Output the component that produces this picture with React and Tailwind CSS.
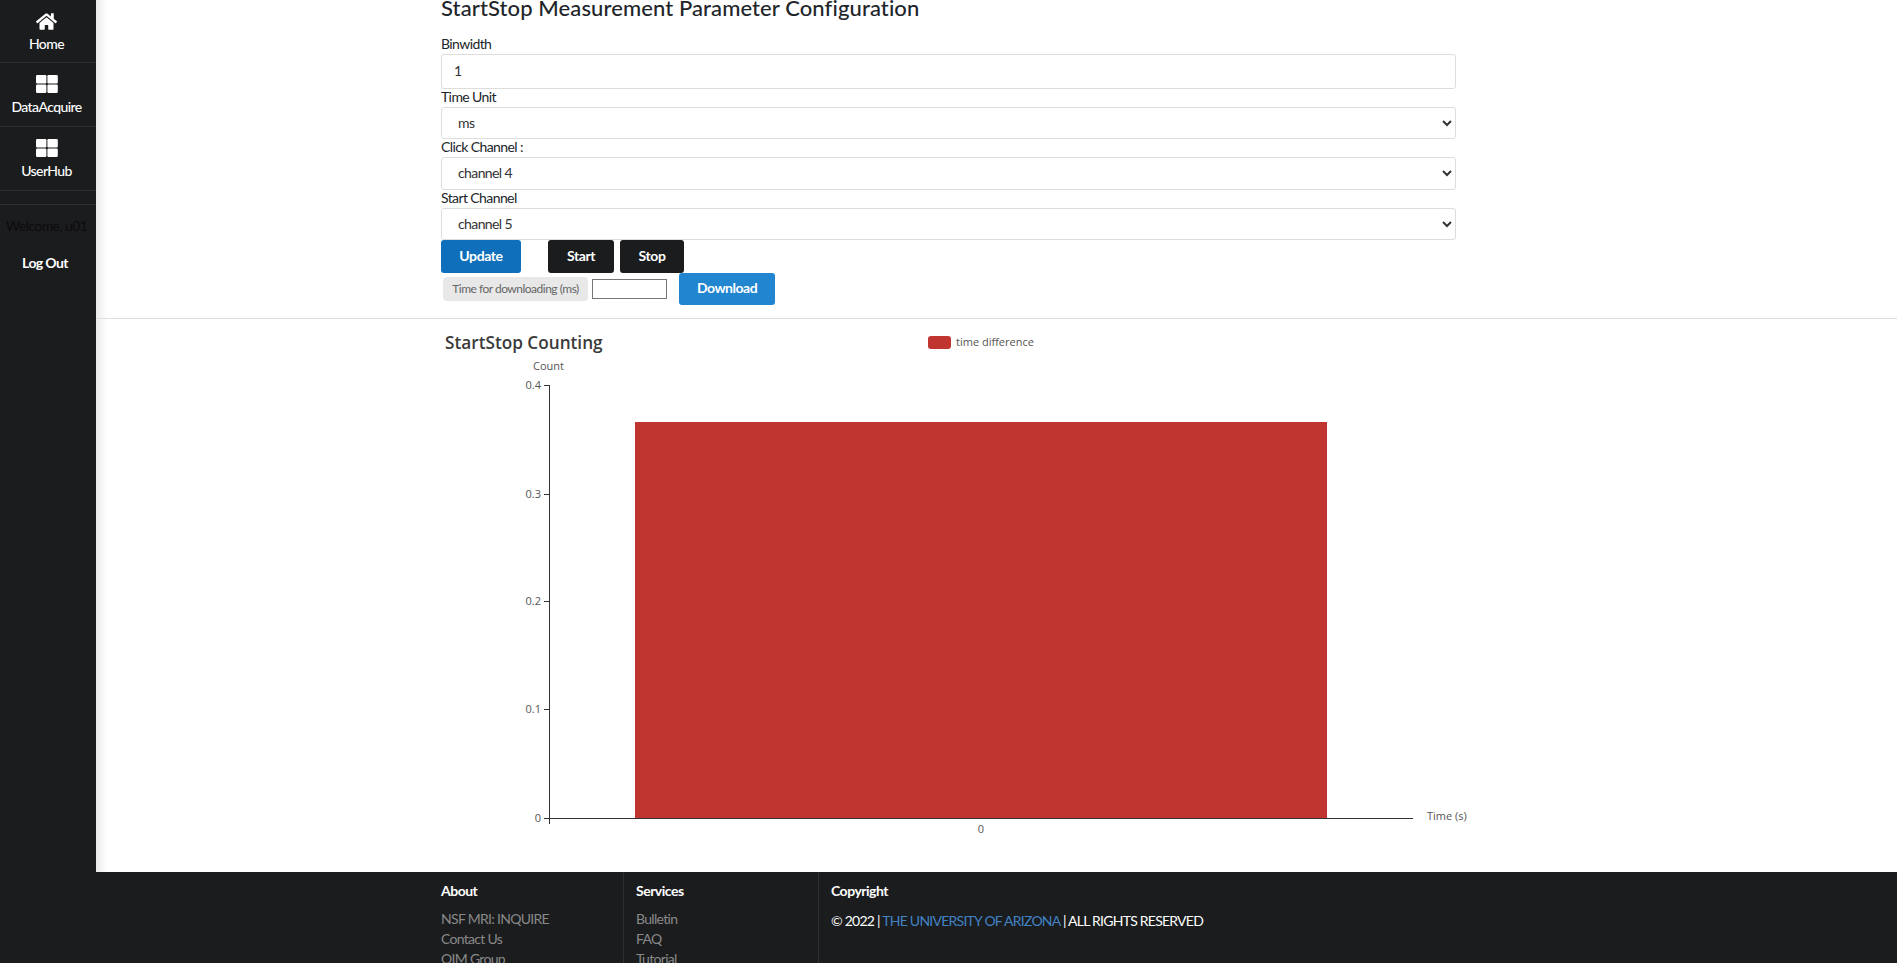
import { FaHome } from 'react-icons/fa'

const lato = 'font-["Lato","Liberation_Sans",sans-serif]'

function GridIcon() {
  return (
    <svg width="22" height="18" viewBox="0 0 22 18" fill="#fff">
      <rect x="0" y="0" width="10.4" height="8.4" rx="1.2" />
      <rect x="11.4" y="0" width="10.4" height="8.4" rx="1.2" />
      <rect x="0" y="9.6" width="10.4" height="8.4" rx="1.2" />
      <rect x="11.4" y="9.6" width="10.4" height="8.4" rx="1.2" />
    </svg>
  )
}

function SideItem({ icon, label, className, labelClass = 'mt-[4px]' }) {
  return (
    <div className={`flex flex-col items-center pr-[3px] border-b border-[#2e2f31] ${className}`}>
      {icon}
      <span className={`text-[14px] leading-[20px] font-medium tracking-[-0.6px] text-white ${labelClass}`}>{label}</span>
    </div>
  )
}

function Sidebar() {
  return (
    <aside className="w-[96px] shrink-0 bg-[#1b1c1e] flex flex-col">
      <SideItem icon={<FaHome size={21} color="#fff" />} label="Home" className="h-[63px] pt-[11px]" labelClass="mt-[2px]" />
      <SideItem icon={<GridIcon />} label="DataAcquire" className="h-[64px] pt-[12px]" />
      <SideItem icon={<GridIcon />} label="UserHub" className="h-[64px] pt-[12px]" />
      <div className="h-[14px] border-b border-[#2e2f31]" />
      <div className="mt-[11px] pr-[3px] text-center text-[14px] leading-[20px] tracking-[-0.6px] text-[#0b0b0c]">Welcome, u01</div>
      <div className="mt-[17px] pr-[6px] text-center text-[14px] leading-[20px] tracking-[-0.6px] font-bold text-white">Log Out</div>
    </aside>
  )
}

function Field({ label, children }) {
  return (
    <div className="flex flex-col">
      <label className="text-[14px] leading-[16px] pb-[2px] tracking-[-0.6px] text-[#212529]">{label}</label>
      {children}
    </div>
  )
}

function Choice({ value, height }) {
  return (
    <select
      defaultValue={value}
      className={`w-full ${height} bg-white border border-[#dddddd] rounded-[3px] pl-[12px] pr-[6px] pb-[2px] text-[14px] tracking-[-0.6px] text-[#333333]`}
    >
      <option>{value}</option>
    </select>
  )
}

function ConfigForm() {
  return (
    <div className="ml-[345px] w-[1015px] -mt-[6px]">
      <h1 className="text-[22px] leading-[28px] font-medium tracking-[0.1px] text-[#212529]">StartStop Measurement Parameter Configuration</h1>
      <div className="mt-[14px] flex flex-col">
        <Field label="Binwidth">
          <input
            readOnly
            value="1"
            className="w-full h-[35px] bg-white border border-[#dddddd] rounded-[3px] px-[12px] pb-[2px] text-[14px] text-[#333333]"
          />
        </Field>
        <Field label="Time Unit"><Choice value="ms" height="h-[32px]" /></Field>
        <Field label="Click Channel :"><Choice value="channel 4" height="h-[33px]" /></Field>
        <Field label="Start Channel"><Choice value="channel 5" height="h-[32px]" /></Field>
      </div>
      <div className="flex h-[33px]">
        <button className="w-[80px] pb-[3px] rounded-[3px] bg-[#0f6fba] text-white text-[14px] tracking-[-0.4px] font-bold">Update</button>
        <button className="w-[66px] ml-[27px] pb-[3px] rounded-[3px] bg-[#1b1c1e] text-white text-[14px] tracking-[-0.4px] font-bold">Start</button>
        <button className="w-[64px] ml-[6px] pb-[3px] rounded-[3px] bg-[#1b1c1e] text-white text-[14px] tracking-[-0.4px] font-bold">Stop</button>
      </div>
      <div className="flex items-center h-[32px]">
        <span className="ml-[2px] w-[145px] h-[24px] flex items-center justify-center rounded-[4px] bg-[#e8e8e8] text-[12px] tracking-[-0.5px] text-[#666666]">Time for downloading (ms)</span>
        <input readOnly className="ml-[4px] w-[75px] h-[20px] border border-[#767676] bg-white" />
        <button className="ml-[12px] w-[96px] h-[32px] pb-[3px] rounded-[3px] bg-[#2185d0] text-white text-[14px] tracking-[-0.5px] font-bold">Download</button>
      </div>
    </div>
  )
}

function Chart() {
  // plot coordinates are page pixels minus the svg origin (96, 319)
  const ticks = [
    ['0.4', 66],
    ['0.3', 175],
    ['0.2', 282],
    ['0.1', 390],
    ['0', 499],
  ]
  const font = '"Open Sans", "Noto Sans", sans-serif'
  return (
    <svg width="1801" height="553" className="block">
      <text x="349" y="30" fontFamily={font} fontSize="17.2" fontWeight="600" fill="#3a3a3a">StartStop Counting</text>
      <rect x="832" y="17" width="23" height="13" rx="3" fill="#c03530" />
      <text x="860" y="27" fontFamily={font} fontSize="11" fill="#555555">time difference</text>
      <text x="437" y="51" fontFamily={font} fontSize="11" fill="#555555">Count</text>
      <rect x="539" y="103" width="692" height="396" fill="#c03530" />
      <line x1="453.5" y1="66" x2="453.5" y2="505" stroke="#333333" />
      <line x1="453" y1="499.5" x2="1317" y2="499.5" stroke="#333333" />
      {ticks.map(([label, y]) => (
        <g key={label}>
          <line x1="448" y1={y + 0.5} x2="453" y2={y + 0.5} stroke="#333333" />
          <text x="445" y={y + 4} textAnchor="end" fontFamily={font} fontSize="11" fill="#555555">{label}</text>
        </g>
      ))}
      <text x="885" y="514" textAnchor="middle" fontFamily={font} fontSize="11" fill="#555555">0</text>
      <text x="1331" y="501" fontFamily={font} fontSize="11" fill="#555555">Time (s)</text>
    </svg>
  )
}

function FooterCol({ title, items, className }) {
  return (
    <div className={`pt-[9px] ${className}`}>
      <div className="text-[14px] leading-[20px] tracking-[-0.5px] font-bold text-white">{title}</div>
      <ul className="mt-[8px] flex flex-col">
        {items.map((item) => (
          <li key={item} className="text-[14px] leading-[20px] tracking-[-0.7px] text-[#888888]">{item}</li>
        ))}
      </ul>
    </div>
  )
}

function Footer() {
  return (
    <footer className="h-[91px] shrink-0 bg-[#1b1c1e] flex pl-[345px] overflow-hidden">
      <FooterCol title="About" items={['NSF MRI: INQUIRE', 'Contact Us', 'OIM Group']} className="w-[183px] border-r border-[#2e2f31]" />
      <FooterCol title="Services" items={['Bulletin', 'FAQ', 'Tutorial']} className="w-[195px] pl-[12px] border-r border-[#2e2f31]" />
      <div className="pl-[12px] pt-[9px]">
        <div className="text-[14px] leading-[20px] tracking-[-0.5px] font-bold text-white">Copyright</div>
        <p className="mt-[10px] text-[14px] leading-[20px] tracking-[-0.75px] text-white">
          © 2022 | <span className="text-[#4183c4]">THE UNIVERSITY OF ARIZONA</span> | ALL RIGHTS RESERVED
        </p>
      </div>
    </footer>
  )
}

export default function App() {
  return (
    <div className={`h-screen overflow-hidden flex bg-[#1b1c1e] ${lato}`}>
      <Sidebar />
      <div className="flex-1 min-w-0 flex flex-col">
        <main className="h-[872px] shrink-0 bg-white shadow-[inset_12px_0_10px_-8px_rgba(34,36,60,0.12)] overflow-hidden">
          <ConfigForm />
          <div className="mt-[13px] border-t border-[#dedede]" />
          <Chart />
        </main>
        <Footer />
      </div>
    </div>
  )
}
